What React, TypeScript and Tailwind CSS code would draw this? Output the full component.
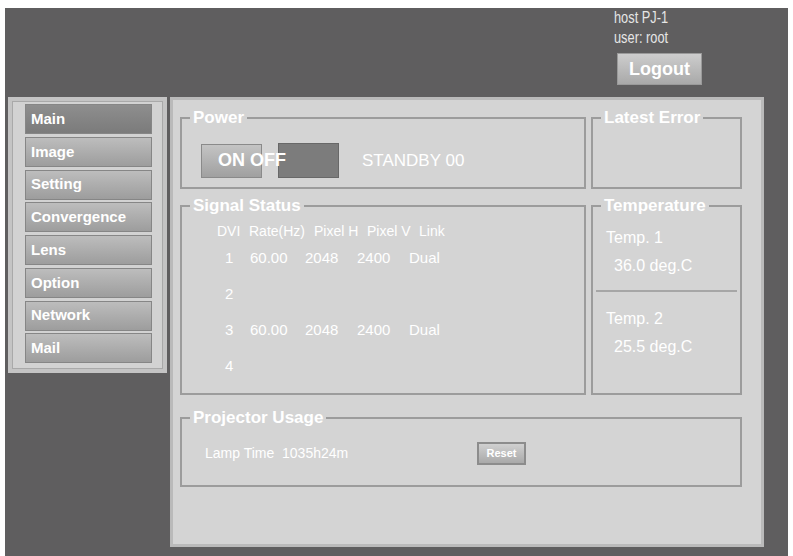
import type { ReactNode } from "react";

const navItems = ["Main", "Image", "Setting", "Convergence", "Lens", "Option", "Network", "Mail"];

const Box = ({
  title,
  className = "",
  children,
}: {
  title: string;
  className?: string;
  children?: ReactNode;
}) => {
  return (
    <fieldset className={`min-w-0 border-2 border-solid border-[#9c9c9c] ${className}`}>
      <legend className="ml-[8px] px-[3px] text-[17px] leading-[20px] font-bold text-white">
        {title}
      </legend>
      {children}
    </fieldset>
  );
};

const signalRows = [
  { dvi: "1", rate: "60.00", h: "2048", v: "2400", link: "Dual" },
  { dvi: "2", rate: "", h: "", v: "", link: "" },
  { dvi: "3", rate: "60.00", h: "2048", v: "2400", link: "Dual" },
  { dvi: "4", rate: "", h: "", v: "", link: "" },
];

export default function App() {
  return (
    <div className="w-[793px] h-[556px] bg-white pt-[8px] pl-[5px] font-['Liberation_Sans',Arial,sans-serif]">
      <div className="w-[783px] h-[548px] bg-[#5f5e5f] flex flex-col">
        {/* header */}
        <div className="h-[89px] flex justify-end pr-[74px]">
          <div className="w-[100px] text-[16px] leading-[20px] text-[#e6e6e6]">
            <div className="origin-left scale-x-[0.8] whitespace-nowrap">host PJ-1</div>
            <div className="origin-left scale-x-[0.8] whitespace-nowrap">user: root</div>
            <button className="ml-[3px] mt-[5px] w-[85px] h-[32px] border border-[#9a9a9a] bg-gradient-to-b from-[#cdcdcd] to-[#a9a9a9] text-[18px] font-bold text-white">
              Logout
            </button>
          </div>
        </div>

        <div className="flex items-start gap-[3px] pl-[3px]">
          {/* side menu */}
          <div className="w-[159px] h-[276px] bg-[#d2d2d2] border-[4px] border-[#c4c4c4] shadow-[inset_0_0_0_1px_#a9a9a9] pt-[3px] pl-[13px]">
            <div className="flex flex-col gap-[2.75px]">
              {navItems.map((item, i) => (
                <button
                  key={item}
                  className={`w-[127px] h-[30px] flex items-center pl-[5px] border border-[#868686] text-[15px] font-bold text-white ${
                    i === 0
                      ? "bg-gradient-to-b from-[#8e8e8e] to-[#7b7b7b]"
                      : "bg-gradient-to-b from-[#bdbdbd] to-[#9d9d9d]"
                  }`}
                >
                  {item}
                </button>
              ))}
            </div>
          </div>

          {/* main panel */}
          <div className="w-[594px] h-[450px] bg-[#d4d4d4] border-[3px] border-[#bababa] pt-[8px] pl-[7px]">
            <div className="grid grid-cols-[406px_151px] gap-x-[5px]">
              <Box title="Power">
                <div className="flex items-center pl-[19px] pt-[15px] pb-[9px]">
                  <div className="w-[61px] h-[34px] flex items-center pl-[16px] border border-[#8a8a8a] bg-gradient-to-b from-[#c4c4c4] to-[#a0a0a0]">
                    <span className="relative z-10 whitespace-nowrap text-[18px] font-bold text-white">
                      ON OFF
                    </span>
                  </div>
                  <div className="ml-[16px] w-[61px] h-[35px] border border-[#686868] bg-[#7c7c7c]" />
                  <span className="ml-[23px] text-[17px] text-white">STANDBY 00</span>
                </div>
              </Box>

              <Box title="Latest Error">
                <div className="h-[58px]" />
              </Box>

              <Box title="Signal Status" className="mt-[7px]">
                <div className="pl-[35px] pt-[6px] pb-[9px] text-white">
                  <div className="flex h-[18px] items-center text-[14px]">
                    <span className="w-[32px]">DVI</span>
                    <span className="w-[65px]">Rate(Hz)</span>
                    <span className="w-[53px]">Pixel H</span>
                    <span className="w-[52px]">Pixel V</span>
                    <span>Link</span>
                  </div>
                  {signalRows.map((r) => (
                    <div key={r.dvi} className="flex h-[36px] items-center pl-[8px] text-[15px]">
                      <span className="w-[25px]">{r.dvi}</span>
                      <span className="w-[55px]">{r.rate}</span>
                      <span className="w-[52px]">{r.h}</span>
                      <span className="w-[52px]">{r.v}</span>
                      <span>{r.link}</span>
                    </div>
                  ))}
                </div>
              </Box>

              <Box title="Temperature" className="mt-[7px]">
                <div className="text-[16px] leading-[28px] text-white">
                  <div className="pt-[8px] pb-[10px] pl-[13px]">
                    <div>Temp. 1</div>
                    <div className="pl-[8px]">36.0 deg.C</div>
                  </div>
                  <div className="mx-[3px] h-[2px] bg-[#a6a6a6]" />
                  <div className="pt-[13px] pl-[13px]">
                    <div>Temp. 2</div>
                    <div className="pl-[8px]">25.5 deg.C</div>
                  </div>
                </div>
              </Box>

              <Box title="Projector Usage" className="col-span-2 mt-[13px]">
                <div className="flex items-start pl-[23px] pt-[14px] pb-[20px]">
                  <div className="w-[272px] h-[23px] flex items-center text-[14px] text-white whitespace-pre">
                    {"Lamp Time  1035h24m"}
                  </div>
                  <button className="w-[49px] h-[23px] border-2 border-[#8c8c8c] bg-gradient-to-b from-[#d0d0d0] to-[#a9a9a9] text-[11px] font-bold text-white">
                    Reset
                  </button>
                </div>
              </Box>
            </div>
          </div>
        </div>
      </div>
    </div>
  );
}
